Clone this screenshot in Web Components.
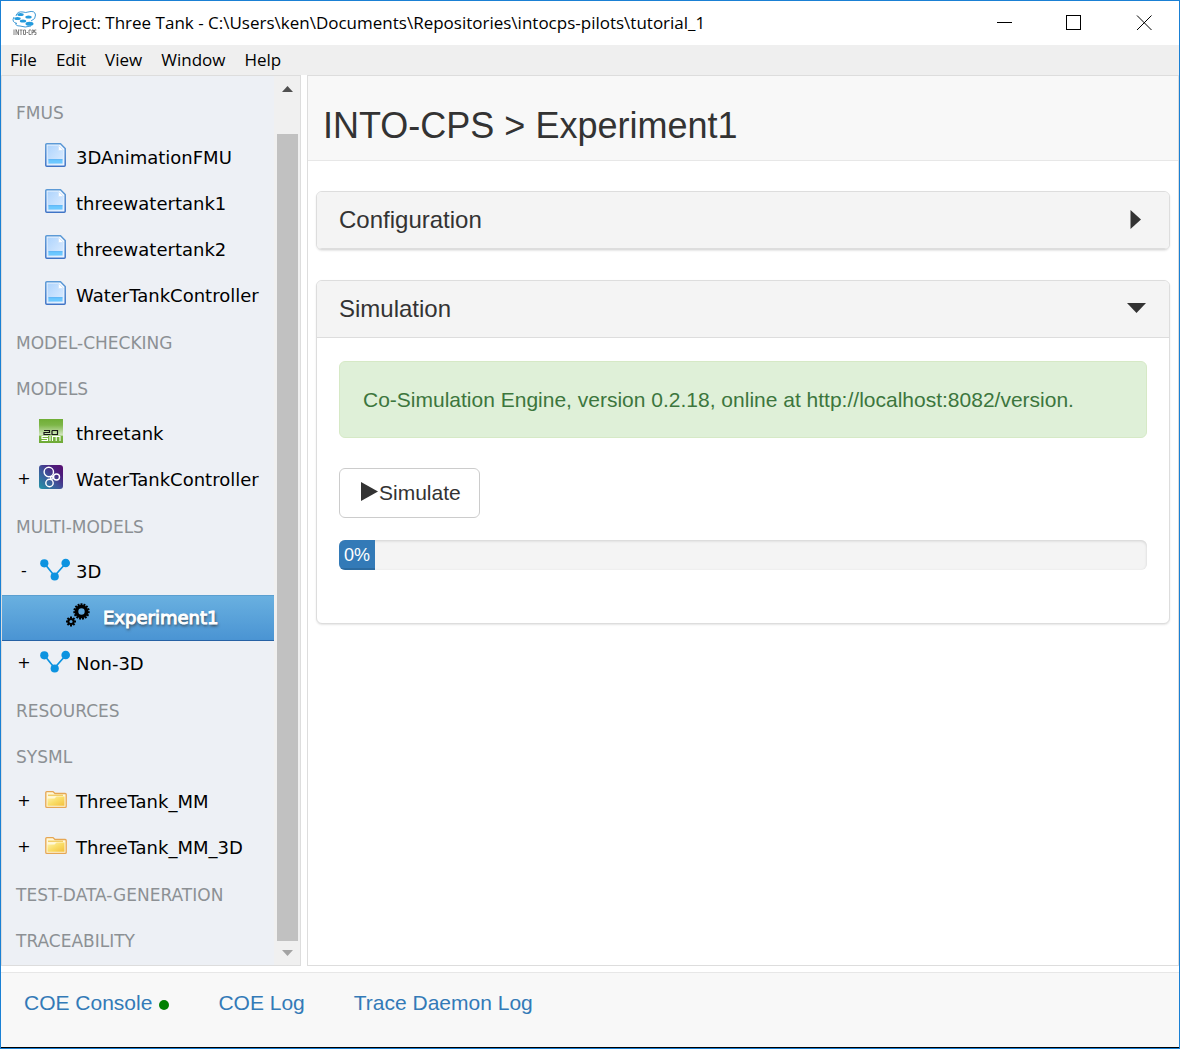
<!DOCTYPE html>
<html lang="en">
<head>
<meta charset="utf-8">
<title>Project: Three Tank</title>
<style>
  html, body { height: 100%; margin: 0; }
  body { font-family: "Liberation Sans", Arial, sans-serif; color: #333; background: #fff; overflow: hidden; }
</style>
</head>
<body>
<app-window></app-window>

<script>
const define = (name, html, setup) => {
  const template = document.createElement('template');
  template.innerHTML = html;
  customElements.define(name, class extends HTMLElement {
    connectedCallback() {
      if (this.shadowRoot) return;
      const root = this.attachShadow({ mode: 'open' });
      root.append(template.content.cloneNode(true));
      if (setup) setup(this, root);
    }
  });
};

/* Tree icons share a 32 x 24 box */
const gear = (cx, cy, r, teeth, tooth, hole) => {
  let s = `<circle cx="${cx}" cy="${cy}" r="${(r + hole) / 2}" fill="none" stroke="#000" stroke-width="${r - hole}"/>`;
  for (let i = 0; i < teeth; i++)
    s += `<rect x="${cx - tooth / 2}" y="${cy - r - tooth * 0.7}" width="${tooth}" height="${tooth}" transform="rotate(${i * 360 / teeth} ${cx} ${cy})"/>`;
  return s;
};
const icons = {
  doc: `<defs><linearGradient id="g" x1="0" y1="0" x2="1" y2="1"><stop offset="0" stop-color="#aed4fd"/><stop offset="1" stop-color="#deedff"/></linearGradient>
    <linearGradient id="s" x1="0" y1="0" x2="0" y2="1"><stop offset="0" stop-color="#5c9ad6"/><stop offset="1" stop-color="#3f74c6"/></linearGradient></defs>
    <g transform="translate(1 0)"><path d="M7 .8H20.500L25.200 5.500V22.200Q25.200 23.200 24.200 23.200H6.800Q5.800 23.200 5.800 22.200V1.800Q5.800.8 6.800.8Z" fill="#f0f7ff" stroke="url(#s)" stroke-width="1.500"/>
    <path d="M7.500 2.500H18.500V8H23.500V21.500H7.500Z" fill="url(#g)"/><path d="M18.500 2.500V7.500H23.500Z" fill="#fff" stroke="#c4defa" stroke-width=".7"/>
    <path d="M8.500 16.500H22.500V20.500H8.500Z" fill="#6cc8ff"/><path d="M8.500 16.700H22.500" stroke="#55b2f5"/></g>`,
  sim: `<defs><linearGradient id="g" x1="0" y1="0" x2="0" y2="1"><stop offset="0" stop-color="#6fad35"/><stop offset=".25" stop-color="#7db648"/><stop offset=".68" stop-color="#d5e8c3"/><stop offset=".7" stop-color="#7ab542"/><stop offset="1" stop-color="#6eaa35"/></linearGradient></defs>
    <path d="M0 0H24V24H0Z" fill="url(#g)"/>
    <path d="M5 11.500H10.500V13.500H5V15.500H11.500M13 11.500H18.500V15.500H13V11.500" fill="none" stroke="#161616" stroke-width="1.200"/>
    <path d="M9 17.500H3V19.500H8.500V21.500H2.500M11 17V22M13.500 22V17.500H21V22M17.200 17.500V22" fill="none" stroke="#fff" stroke-width="1.100"/>`,
  overture: `<defs><linearGradient id="g" x1="0" y1="1" x2="1" y2="0"><stop offset="0" stop-color="#2196a6"/><stop offset=".45" stop-color="#3f559b"/><stop offset=".75" stop-color="#4c1d7c"/><stop offset="1" stop-color="#5a0e70"/></linearGradient></defs>
    <rect width="24" height="24" rx="3" fill="url(#g)"/>
    <g fill="none" stroke="#fff" stroke-width="1.400"><circle cx="9.800" cy="7" r="4.700"/><circle cx="17.500" cy="12" r="3"/><circle cx="10.500" cy="18" r="3.700"/><circle cx="12.800" cy="12.800" r="1.300"/></g>`,
  nodes: `<path d="M5.500 6.500 15.500 19 27 6" fill="none" stroke="#0c93e0" stroke-width="1.700"/><g fill="#0c93e0"><circle cx="5.300" cy="6.300" r="4.100"/><circle cx="26.700" cy="6" r="4.300"/><circle cx="15.700" cy="19.500" r="4.100"/></g>`,
  gears: gear(15.500, 8.500, 6.800, 15, 2, 3.200) + gear(5, 18.500, 3.600, 8, 2, 1.600),
  folder: `<defs><linearGradient id="g" x1="0" y1="0" x2="1" y2="1"><stop offset="0" stop-color="#fff3ae"/><stop offset=".5" stop-color="#f9dd67"/><stop offset="1" stop-color="#f3bf3d"/></linearGradient></defs>
    <path d="M6.800 5.500Q6.800 4.600 7.800 4.600H14L16 6.500H26.200Q27.200 6.500 27.200 7.500V19.500Q27.200 20.400 26.200 20.400H7.800Q6.800 20.400 6.800 19.500Z" fill="#fff8d8" stroke="#e6a653" stroke-width="1.300"/>
    <path d="M8.500 11.500H15.500L17.500 9.500H25.500V18.800H8.500Z" fill="url(#g)"/><path d="M9 8.300H16.500L18 8.300H24" stroke="#f2cf68" stroke-width="1.500"/>`
};

define('title-bar', `
<style>
  :host { display: flex; align-items: center; height: 44px; padding-left: 10px; background: #fff; color: #000; font-family: "Open Sans", "Noto Sans", sans-serif; }
  .logo { width: 26px; height: 26px; margin-right: 4px; flex: none; }
  h1 { flex: 1; min-width: 0; margin: 0; font-size: 17px; font-weight: 400; line-height: 24px; white-space: nowrap; overflow: hidden; }
  button { width: 70px; height: 44px; padding: 0; border: 0; background: none; }
  button svg { display: block; margin: auto; }
</style>
<svg class="logo" viewBox="0 0 26 26" aria-hidden="true">
  <g fill="none" stroke="#2a8fd0" stroke-width=".9"><path d="M5 6Q6 1 12 2Q15 3 17 2Q24 0 24.500 5Q25 9 20 11M3 7Q0 12 6 13.500M5 13Q4 16 9 16Q14 18 20 16"/></g>
  <g fill="#249bdd"><ellipse cx="9.500" cy="4.500" rx="3.200" ry="1.500"/><ellipse cx="6.500" cy="8.500" rx="3.200" ry="1.500"/><ellipse cx="17.500" cy="7" rx="3.200" ry="1.600"/><ellipse cx="12" cy="11" rx="3.200" ry="1.600"/><ellipse cx="18.500" cy="13.800" rx="4" ry="2"/></g>
  <path d="M3 19.500V25M5 25V19.500L7.500 25V19.500M8.500 20H11.500M10 20V25M12.500 20H14.500V24.500H12.500ZM15.500 22.500H17M20 20H18V24.500H20M21 25V20H22.500V22.500H21M25.300 20H23.500V22.300H25V24.500H23.300" fill="none" stroke="#666" stroke-width=".8"/>
</svg>
<h1><slot></slot></h1>
<button aria-label="Minimize"><svg width="16" height="16"><path d="M1 7.500H16" stroke="#000"/></svg></button>
<button aria-label="Maximize"><svg width="16" height="16"><rect x=".5" y=".5" width="14" height="14" fill="none" stroke="#000"/></svg></button>
<button aria-label="Close"><svg width="16" height="16"><path d="M1 .5 15.500 15M15.500.5 1 15" stroke="#000"/></svg></button>
`);

define('menu-bar', `
<style>
  :host { display: flex; gap: 1px; height: 30px; background: #efefef; }
  button { padding: 0 9px; border: 0; background: none; color: #000; font: 17px/30px "Open Sans", "Noto Sans", sans-serif; }
</style>
<button>File</button><button>Edit</button><button>View</button><button>Window</button><button>Help</button>
`);

define('tree-group', `
<style>
  :host { display: block; }
  h2 { margin: 0; padding: 2px 0 0 14px; height: 44px; font-size: 17px; font-weight: 400; line-height: 44px; color: #8c9094; white-space: nowrap; }
</style>
<h2></h2><slot></slot>
`, (el, root) => root.querySelector('h2').textContent = el.getAttribute('label'));

define('tree-item', `
<style>
  :host { display: block; }
  button { display: flex; align-items: center; box-sizing: border-box; width: 100%; height: 46px; padding: 0 0 0 14px; border: 0; background: none; color: #000; font: inherit; text-align: left; white-space: nowrap; }
  .mark { width: 16px; margin-right: 7px; text-align: center; line-height: 44px; height: 46px; font-size: 16px; }
  .text { padding-bottom: 2px; }
  svg { flex: none; width: 32px; height: 24px; margin: 0 5px 6px 0; }
  :host([child]) button { padding-left: 41px; }
  :host([selected]) button { background: linear-gradient(#69b0e0, #4a94d3); border-top: 1px solid #5b9fd0; border-bottom: 1px solid #2661a4; color: #fff; }
  :host([selected]) .text { -webkit-text-stroke: 1px #fff; text-shadow: 1px 2px 3px #333; }
</style>
<button><span class="mark"></span><svg viewBox="0 0 32 24" aria-hidden="true"></svg><span class="text"><slot></slot></span></button>
`, (el, root) => {
  root.querySelector('.mark').textContent = el.getAttribute('mark') || '';
  root.querySelector('svg').innerHTML = icons[el.getAttribute('icon')];
});

define('project-tree', `
<style>
  :host { display: flex; box-sizing: border-box; width: 300px; flex: none; border: 1px solid #ddd; background: #edf0f5; font-family: "DejaVu Sans", Verdana, sans-serif; font-size: 18px; overflow: hidden; }
  nav { flex: 1; min-width: 0; padding-top: 13px; }
  .track { display: flex; flex-direction: column; align-items: center; box-sizing: border-box; width: 26px; padding: 0 2px 0 3px; background: #f0f0f0; }
  .thumb { width: 21px; flex: 1; background: #c1c1c1; }
  .up, .down { display: block; width: 11px; height: 6px; }
  .up { margin: 10px 0 42px; }
  .down { margin: 9px 0; }
</style>
<nav aria-label="Project">
  <tree-group label="FMUS">
    <tree-item icon="doc">3DAnimationFMU</tree-item>
    <tree-item icon="doc">threewatertank1</tree-item>
    <tree-item icon="doc">threewatertank2</tree-item>
    <tree-item icon="doc">WaterTankController</tree-item>
  </tree-group>
  <tree-group label="MODEL-CHECKING"></tree-group>
  <tree-group label="MODELS">
    <tree-item icon="sim">threetank</tree-item>
    <tree-item icon="overture" mark="+">WaterTankController</tree-item>
  </tree-group>
  <tree-group label="MULTI-MODELS">
    <tree-item icon="nodes" mark="-">3D</tree-item>
    <tree-item icon="gears" child selected>Experiment1</tree-item>
    <tree-item icon="nodes" mark="+">Non-3D</tree-item>
  </tree-group>
  <tree-group label="RESOURCES"></tree-group>
  <tree-group label="SYSML">
    <tree-item icon="folder" mark="+">ThreeTank_MM</tree-item>
    <tree-item icon="folder" mark="+">ThreeTank_MM_3D</tree-item>
  </tree-group>
  <tree-group label="TEST-DATA-GENERATION"></tree-group>
  <tree-group label="TRACEABILITY"></tree-group>
</nav>
<div class="track" aria-hidden="true">
  <svg class="up"><path d="M0 6 5.500 0 11 6Z" fill="#505050"/></svg>
  <div class="thumb"></div>
  <svg class="down"><path d="M0 0 5.500 6 11 0Z" fill="#a3a3a3"/></svg>
</div>
`);

define('fold-panel', `
<style>
  :host { display: block; border: 1px solid #ddd; border-radius: 6px; background: #fff; box-shadow: 0 1px 2px rgba(0,0,0,.1); overflow: hidden; }
  h3 { margin: 0; }
  button { display: flex; align-items: center; justify-content: space-between; width: 100%; height: 57px; padding: 0 22px; border: 0; border-bottom: 1px solid #ddd; background: #f4f4f4; color: #333; font: 24px/28px "Liberation Sans", Arial, sans-serif; }
  svg { width: 20px; height: 20px; }
  .open { display: none; }
  :host([open]) .open { display: block; }
  :host([open]) .closed { display: none; }
  .body { display: none; padding: 23px 22px 53px; }
  :host([open]) .body { display: block; }
</style>
<h3><button><span></span>
<svg class="closed" aria-hidden="true"><path d="M3.500 0 14 9.500 3.500 19Z" fill="#333"/></svg>
<svg class="open" aria-hidden="true"><path d="M0 4H19L9.500 14Z" fill="#333"/></svg></button></h3>
<div class="body"><slot></slot></div>
`, (el, root) => {
  root.querySelector('span').textContent = el.getAttribute('label');
  root.querySelector('button').setAttribute('aria-expanded', el.hasAttribute('open'));
});

define('simulation-view', `
<style>
  :host { display: block; font-size: 21px; line-height: 30px; }
  .alert { padding: 23px 23px 22px; border: 1px solid #d6e9c6; border-radius: 6px; background: #dff0d8; color: #3c763d; }
  button { display: flex; align-items: center; height: 50px; margin: 30px 0 22px; padding: 0 18px 0 21px; border: 1px solid #ccc; border-radius: 6px; background: #fff; color: #333; font: inherit; }
  button svg { width: 18px; height: 20px; margin-bottom: 2px; }
  .progress { height: 30px; border-radius: 6px; background: #f4f4f4; box-shadow: inset 0 1px 3px rgba(0,0,0,.15); overflow: hidden; }
  .bar { width: 36px; height: 30px; background: #337ab7; box-shadow: inset 0 -2px 0 rgba(0,0,0,.12); color: #fff; font-size: 18px; text-align: center; }
</style>
<div class="alert" role="status">Co-Simulation Engine, version 0.2.18, online at http://localhost:8082/version.</div>
<button><svg aria-hidden="true"><path d="M0 0 17 9.500 0 19Z" fill="#333"/></svg>Simulate</button>
<div class="progress" role="progressbar" aria-label="Simulation progress" aria-valuenow="0" aria-valuemin="0" aria-valuemax="100"><div class="bar">0%</div></div>
`);

define('main-view', `
<style>
  :host { display: block; flex: 1; min-width: 0; border: 1px solid #ddd; background: #fff; overflow: hidden; }
  header { padding: 30px 16px 14px 15px; border-bottom: 1px solid #e7e7e7; background: #f8f8f8; }
  h2 { margin: 0; font-size: 36px; font-weight: 400; line-height: 40px; }
  section { display: flex; flex-direction: column; gap: 30px; padding: 30px 8px; }
</style>
<header><h2>INTO-CPS &gt; Experiment1</h2></header>
<section>
  <fold-panel label="Configuration"></fold-panel>
  <fold-panel label="Simulation" open><simulation-view></simulation-view></fold-panel>
</section>
`);

define('log-bar', `
<style>
  :host { display: flex; align-items: flex-start; gap: 49px; height: 59px; padding: 15px 23px 0; border-top: 1px solid #e7e7e7; background: #f8f8f8; font-size: 21px; line-height: 30px; }
  a { color: #337ab7; text-decoration: none; white-space: nowrap; }
  i { display: inline-block; width: 10px; height: 10px; margin-left: 7px; border-radius: 50%; background: #008000; }
</style>
<a href="#console">COE Console<i></i></a><a href="#log">COE Log</a><a href="#trace">Trace Daemon Log</a>
`);

define('app-window', `
<style>
  :host { display: flex; flex-direction: column; box-sizing: border-box; height: 100vh; border: 1px solid #1a80d4; background: #fff; }
  main { display: flex; flex: 1; min-height: 0; gap: 6px; margin-bottom: 6px; }
  log-bar { border-bottom: 1px solid #000; }
</style>
<title-bar>Project: Three Tank - C:\\Users\\ken\\Documents\\Repositories\\intocps-pilots\\tutorial_1</title-bar>
<menu-bar></menu-bar>
<main><project-tree></project-tree><main-view></main-view></main>
<log-bar></log-bar>
`);
</script>
</body>
</html>
